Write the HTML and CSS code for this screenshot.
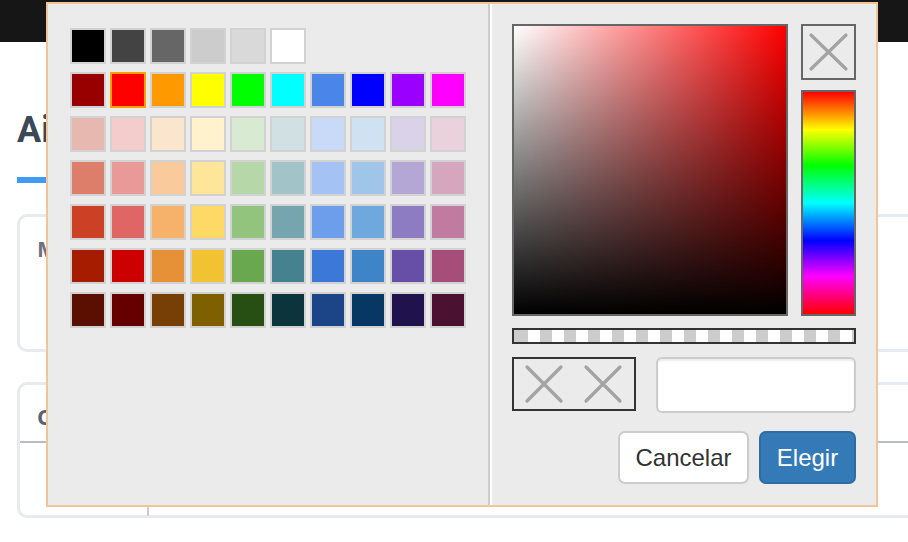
FILE: index.html
```html
<!DOCTYPE html>
<html lang="es">
<head>
<meta charset="utf-8">
<title>Selector de color</title>
<link rel="stylesheet" href="styles.css">
</head>
<body>
<header class="topbar"></header>
<main class="page">
  <h1 class="title">Aire acondicionado</h1>
  <div class="title-bar"></div>
  <section class="card card-one">
    <div class="card-label">Modo</div>
  </section>
  <section class="card card-two">
    <div class="card-head"><div class="card-label">Configuración</div></div>
    <div class="card-body">
      <div class="cell-left"></div>
      <div class="cell-right"></div>
    </div>
  </section>
</main>

<div class="picker">
  <div class="palette">
    <div class="swatch-row">
      <span class="sw" style="background:#000000"></span>
      <span class="sw" style="background:#434343"></span>
      <span class="sw" style="background:#666666"></span>
      <span class="sw" style="background:#cccccc"></span>
      <span class="sw" style="background:#d9d9d9"></span>
      <span class="sw" style="background:#ffffff"></span>
    </div>
    <div class="swatch-row">
      <span class="sw" style="background:#980000"></span>
      <span class="sw sel" style="background:#ff0000"></span>
      <span class="sw" style="background:#ff9900"></span>
      <span class="sw" style="background:#ffff00"></span>
      <span class="sw" style="background:#00ff00"></span>
      <span class="sw" style="background:#00ffff"></span>
      <span class="sw" style="background:#4a86e8"></span>
      <span class="sw" style="background:#0000ff"></span>
      <span class="sw" style="background:#9900ff"></span>
      <span class="sw" style="background:#ff00ff"></span>
    </div>
    <div class="swatch-row">
      <span class="sw" style="background:#e6b8af"></span>
      <span class="sw" style="background:#f4cccc"></span>
      <span class="sw" style="background:#fce5cd"></span>
      <span class="sw" style="background:#fff2cc"></span>
      <span class="sw" style="background:#d9ead3"></span>
      <span class="sw" style="background:#d0e0e3"></span>
      <span class="sw" style="background:#c9daf8"></span>
      <span class="sw" style="background:#cfe2f3"></span>
      <span class="sw" style="background:#d9d2e9"></span>
      <span class="sw" style="background:#ead1dc"></span>
    </div>
    <div class="swatch-row">
      <span class="sw" style="background:#dd7e6b"></span>
      <span class="sw" style="background:#ea9999"></span>
      <span class="sw" style="background:#f9cb9c"></span>
      <span class="sw" style="background:#ffe599"></span>
      <span class="sw" style="background:#b6d7a8"></span>
      <span class="sw" style="background:#a2c4c9"></span>
      <span class="sw" style="background:#a4c2f4"></span>
      <span class="sw" style="background:#9fc5e8"></span>
      <span class="sw" style="background:#b4a7d6"></span>
      <span class="sw" style="background:#d5a6bd"></span>
    </div>
    <div class="swatch-row">
      <span class="sw" style="background:#cc4125"></span>
      <span class="sw" style="background:#e06666"></span>
      <span class="sw" style="background:#f6b26b"></span>
      <span class="sw" style="background:#ffd966"></span>
      <span class="sw" style="background:#93c47d"></span>
      <span class="sw" style="background:#76a5af"></span>
      <span class="sw" style="background:#6d9eeb"></span>
      <span class="sw" style="background:#6fa8dc"></span>
      <span class="sw" style="background:#8e7cc3"></span>
      <span class="sw" style="background:#c27ba0"></span>
    </div>
    <div class="swatch-row">
      <span class="sw" style="background:#a61c00"></span>
      <span class="sw" style="background:#cc0000"></span>
      <span class="sw" style="background:#e69138"></span>
      <span class="sw" style="background:#f1c232"></span>
      <span class="sw" style="background:#6aa84f"></span>
      <span class="sw" style="background:#45818e"></span>
      <span class="sw" style="background:#3c78d8"></span>
      <span class="sw" style="background:#3d85c6"></span>
      <span class="sw" style="background:#674ea7"></span>
      <span class="sw" style="background:#a64d79"></span>
    </div>
    <div class="swatch-row">
      <span class="sw" style="background:#5b0f00"></span>
      <span class="sw" style="background:#660000"></span>
      <span class="sw" style="background:#783f04"></span>
      <span class="sw" style="background:#7f6000"></span>
      <span class="sw" style="background:#274e13"></span>
      <span class="sw" style="background:#0c343d"></span>
      <span class="sw" style="background:#1c4587"></span>
      <span class="sw" style="background:#073763"></span>
      <span class="sw" style="background:#20124d"></span>
      <span class="sw" style="background:#4c1130"></span>
    </div>
  </div>

  <div class="editor">
    <div class="editor-top">
      <div class="satval"></div>
      <div class="side">
        <div class="clear-box">
          <svg width="51" height="52" viewBox="0 0 51 52"><path d="M8 9 L43 43 M43 9 L8 43" class="x-stroke"/></svg>
        </div>
        <div class="hue"></div>
      </div>
    </div>
    <div class="alpha"></div>
    <div class="editor-mid">
      <div class="preview">
        <svg width="120" height="50" viewBox="0 0 120 50"><path d="M13 8 L47 42 M47 8 L13 42 M72 8 L106 42 M106 8 L72 42" class="x-stroke"/></svg>
      </div>
      <input class="hex-input" type="text" value="">
    </div>
    <div class="editor-actions">
      <button class="btn btn-default">Cancelar</button>
      <button class="btn btn-primary">Elegir</button>
    </div>
  </div>
</div>
</body>
</html>
```

FILE: styles.css
```css
* { box-sizing: border-box; }

html, body {
  margin: 0;
  padding: 0;
  background: #ffffff;
  font-family: "Liberation Sans", Arial, sans-serif;
  overflow: hidden;
  width: 908px;
  height: 542px;
}

.topbar {
  height: 42px;
  background: #161616;
}

.page {
  padding: 0 0 0 17px;
}

.title {
  margin: 0;
  padding-top: 66px;
  font-family: Roboto, "Open Sans", sans-serif;
  font-weight: 700;
  font-size: 36px;
  line-height: 44px;
  color: #3b4858;
  white-space: nowrap;
}

.title-bar {
  margin-top: 25px;
  width: 130px;
  height: 6px;
  background: #3f9bf5;
}

.card {
  border: 3px solid #e7eaef;
  border-radius: 10px;
  margin-right: -30px;
  background: #fff;
}

.card-one {
  margin-top: 31px;
  height: 138px;
  padding: 18px 17px;
}

.card-label {
  font-family: "Open Sans", sans-serif;
  font-weight: 700;
  font-size: 22px;
  line-height: 26px;
  color: #6b7280;
}

.card-two {
  margin-top: 30px;
  height: 136px;
}

.card-two .card-label {
  color: #5b6371;
}

.card-head {
  height: 58px;
  padding: 18px 17px 0;
  border-bottom: 2px solid #b9bdc3;
}

.card-body {
  display: flex;
  height: 73px;
}

.cell-left {
  width: 129px;
  border-right: 2px solid #cccccc;
}

/* ---------- colour picker dialog ---------- */

.picker {
  position: absolute;
  left: 46px;
  top: 2px;
  width: 832px;
  height: 505px;
  border: 2px solid #f2c497;
  background: #ebebeb;
  display: flex;
}

.palette {
  width: 442px;
  padding: 24px 22px;
  border-right: 2px solid #cccccc;
  display: flex;
  flex-direction: column;
  gap: 8px;
}

.swatch-row {
  display: flex;
  gap: 4px;
}

.sw {
  display: block;
  width: 36px;
  height: 36px;
  border: 2px solid #d2d2d2;
}

.sw.sel {
  border-color: #ffa200;
}

.editor {
  flex: 1;
  border-left: 2px solid #ffffff;
  padding: 20px 20px 0 20px;
  display: flex;
  flex-direction: column;
}

.editor-top {
  display: flex;
  gap: 13px;
}

.satval {
  width: 276px;
  height: 292px;
  border: 2px solid #666666;
  background:
    linear-gradient(to top, #000000, rgba(0,0,0,0)),
    linear-gradient(to right, #ffffff, #ff0000);
}

.side {
  width: 55px;
  display: flex;
  flex-direction: column;
  gap: 10px;
}

.clear-box {
  height: 56px;
  border: 2px solid #666666;
}

.clear-box svg,
.preview svg {
  display: block;
}

.x-stroke {
  fill: none;
  stroke: #a3a3a3;
  stroke-width: 3.2;
  stroke-linecap: round;
}

.hue {
  height: 226px;
  border: 2px solid #666666;
  background: linear-gradient(to bottom,
    #ff0000 0%, #ffff00 17%, #00ff00 33%, #00ffff 50%,
    #0000ff 67%, #ff00ff 83%, #ff0000 100%);
}

.alpha {
  margin-top: 12px;
  height: 16px;
  border: 2px solid #333333;
  background-color: #ffffff;
  background-image: repeating-linear-gradient(to right,
    #cccccc 0 12px, #ffffff 12px 24px);
  background-position: 2px 0;
}

.editor-mid {
  margin-top: 13px;
  display: flex;
  gap: 20px;
  align-items: flex-start;
}

.preview {
  width: 124px;
  height: 54px;
  border: 2px solid #333333;
}

.hex-input {
  flex: 1;
  width: 0;
  height: 56px;
  margin: 0;
  border: 2px solid #cccccc;
  border-radius: 6px;
  background: #ffffff;
  box-shadow: inset 0 2px 2px rgba(0,0,0,0.075);
  font: 22px "Liberation Sans", Arial, sans-serif;
  padding: 0 12px;
  outline: none;
}

.editor-actions {
  margin-top: 18px;
  display: flex;
  justify-content: flex-end;
  gap: 10px;
}

.btn {
  height: 53px;
  border-radius: 7px;
  border: 2px solid #cccccc;
  font-family: "Liberation Sans", Arial, sans-serif;
  font-size: 24px;
  line-height: 1;
  padding: 0;
  cursor: pointer;
}

.btn-default {
  width: 131px;
  background: #ffffff;
  color: #333333;
}

.btn-primary {
  width: 97px;
  background: #337ab7;
  border-color: #2e6da4;
  color: #ffffff;
}
```
